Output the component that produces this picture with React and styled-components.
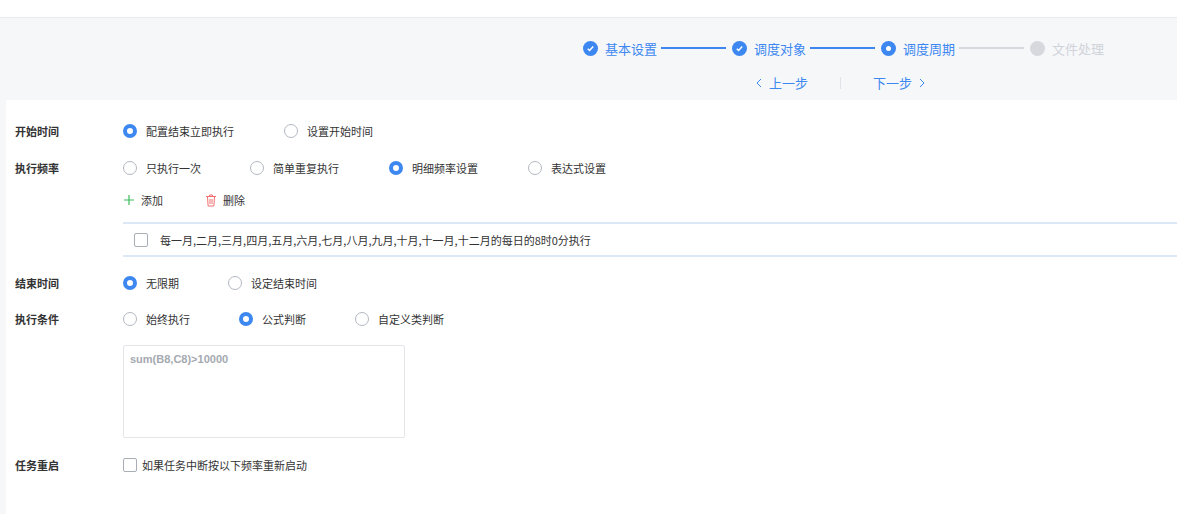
import React from "react";
import styled, { createGlobalStyle } from "styled-components";

const G = createGlobalStyle`
  body{margin:0;background:#fff;font-family:"Noto Sans CJK SC","Liberation Sans",sans-serif;}
`;
const Top = styled.div`height:17px;border-bottom:1px solid #e8eaee;background:#fff;`;
const Head = styled.div`height:82px;background:#f6f7f9;display:flex;flex-direction:column;align-items:flex-end;padding-right:73px;`;
const Steps = styled.div`display:flex;align-items:center;margin-top:20px;height:20px;`;
const Step = styled.div`display:flex;align-items:center;gap:7px;font-size:13px;color:${p=>p.off?"#d0d3da":"#3d87f0"};`;
const Dot = styled.span`width:15px;height:15px;border-radius:50%;display:inline-flex;align-items:center;justify-content:center;background:${p=>p.off?"#d6d8de":"#3d87f0"};`;
const Inner = styled.span`width:5px;height:5px;border-radius:50%;background:#fff;`;
const Line = styled.span`width:65px;height:2px;margin:0 6px 0 4px;background:${p=>p.off?"#d6d8de":"#3d87f0"};`;
const Nav = styled.div`display:flex;align-items:center;margin-top:15px;margin-right:178px;font-size:13px;color:#3d87f0;`;
const NavBtn = styled.span`display:flex;align-items:center;gap:6px;`;
const Sep = styled.span`width:1px;height:12px;background:#e1e3e8;margin:0 32px;`;
const Body = styled.div`display:flex;`;
const Strip = styled.div`width:6px;background:#f6f7f9;min-height:415px;`;
const Main = styled.div`flex:1;padding-top:21px;font-size:11px;color:#333;`;
const Row = styled.div`display:flex;align-items:center;height:${p=>p.h||20}px;margin-bottom:${p=>p.mb||0}px;`;
const Label = styled.div`box-sizing:border-box;width:117px;padding-left:9px;font-weight:bold;color:#333;flex-shrink:0;`;
const Opt = styled.label`display:flex;align-items:center;gap:9px;width:${p=>p.w}px;flex-shrink:0;`;
const Radio = styled.span`width:14px;height:14px;border-radius:50%;box-sizing:border-box;
  border:${p=>p.on?"4px solid #3d87f0":"1px solid #b3b7c0"};background:#fff;`;
const Box = styled.span`width:14px;height:14px;box-sizing:border-box;border:1px solid #a9adb5;border-radius:2px;background:#fff;flex-shrink:0;`;
const Act = styled.span`display:flex;align-items:center;gap:6px;margin-right:42px;`;
const List = styled.div`margin-left:117px;border-top:2px solid #dde8f6;border-bottom:2px solid #dde8f6;height:31px;display:flex;align-items:center;padding-left:11px;gap:12px;margin-bottom:16px;`;
const Area = styled.div`width:282px;height:93px;border:1px solid #e3e5e9;border-radius:2px;box-sizing:border-box;padding:7px 6px;color:#a5a9b1;font-weight:bold;font-family:"Liberation Sans",sans-serif;margin:16px 0 17px 117px;`;

const R=({on,w,children})=>(<Opt w={w}><Radio on={on}/>{children}</Opt>);
const Check=()=>(<svg width="9" height="9" viewBox="0 0 10 10"><path d="M2 5.2l2 2 4-4.4" stroke="#fff" strokeWidth="1.7" fill="none"/></svg>);

export default function App(){
  return(<>
    <G/>
    <Top/>
    <Head>
      <Steps>
        <Step><Dot><Check/></Dot>基本设置</Step><Line/>
        <Step><Dot><Check/></Dot>调度对象</Step><Line/>
        <Step><Dot><Inner/></Dot>调度周期</Step><Line off/>
        <Step off><Dot off/>文件处理</Step>
      </Steps>
      <Nav>
        <NavBtn><svg width="8" height="10" viewBox="0 0 8 10"><path d="M6 1L2 5l4 4" stroke="#3d87f0" fill="none"/></svg> 上一步</NavBtn>
        <Sep/>
        <NavBtn>下一步 <svg width="8" height="10" viewBox="0 0 8 10"><path d="M2 1l4 4-4 4" stroke="#3d87f0" fill="none"/></svg></NavBtn>
      </Nav>
    </Head>
    <Body>
      <Strip/>
      <Main>
        <Row mb={17}><Label>开始时间</Label><R on w={161}>配置结束立即执行</R><R w={120}>设置开始时间</R></Row>
        <Row mb={12}><Label>执行频率</Label><R w={127}>只执行一次</R><R w={139}>简单重复执行</R><R on w={139}>明细频率设置</R><R w={120}>表达式设置</R></Row>
        <Row mb={12}><Label/>
          <Act><svg width="12" height="12" viewBox="0 0 12 12"><path d="M6 1v10M1 6h10" stroke="#3bbf5a" strokeWidth="1.2"/></svg>添加</Act>
          <Act><svg width="12" height="13" viewBox="0 0 12 13"><path d="M1 2.5h10M4.5 2.5V1h3v1.5M2.5 2.5l.6 9.5h5.8l.6-9.5M5 5v5M7 5v5" stroke="#f07070" fill="none"/></svg>删除</Act>
        </Row>
        <List><Box/>每一月,二月,三月,四月,五月,六月,七月,八月,九月,十月,十一月,十二月的每日的8时0分执行</List>
        <Row mb={16}><Label>结束时间</Label><R on w={105}>无限期</R><R w={120}>设定结束时间</R></Row>
        <Row><Label>执行条件</Label><R on={false} w={116}>始终执行</R><R on w={116}>公式判断</R><R w={120}>自定义类判断</R></Row>
        <Area>sum(B8,C8)&gt;10000</Area>
        <Row><Label>任务重启</Label><Opt w={300} style={{gap:5}}><Box/>如果任务中断按以下频率重新启动</Opt></Row>
      </Main>
    </Body>
  </>);
}
